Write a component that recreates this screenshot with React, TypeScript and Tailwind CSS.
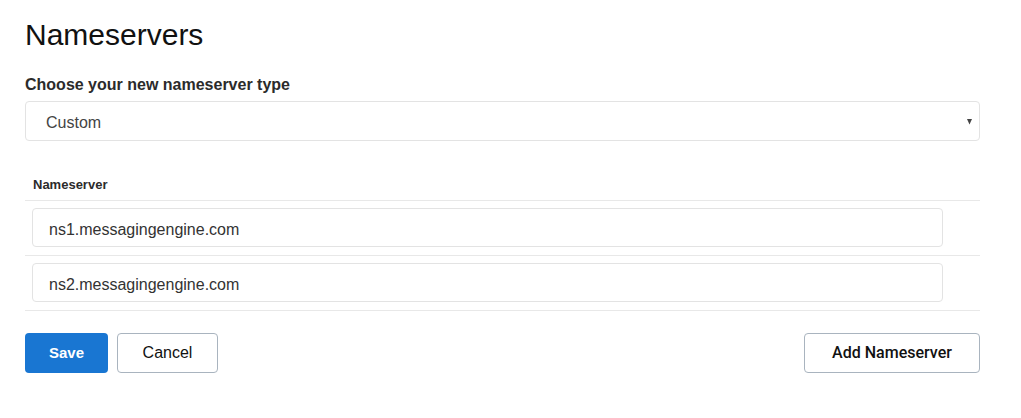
export default function App() {
  const servers = ["ns1.messagingengine.com", "ns2.messagingengine.com"]

  return (
    <div className="min-h-[418px] bg-white font-['Liberation_Sans',Arial,sans-serif]">
      <div className="ml-[25px] w-[955px] pt-[17px]">
        {/* Title */}
        <h1 className="text-[30px] leading-[36px] font-normal text-[#111]">
          Nameservers
        </h1>

        {/* Type select */}
        <div className="mt-[22px] mb-[6px] text-[16px] leading-[20px] font-bold text-[#2b2b2b]">
          Choose your new nameserver type
        </div>
        <div className="flex h-[40px] items-start justify-between rounded-[4px] border border-[#e3e3e3] pt-[11px] pl-[20px] pr-[7px]">
          <span className="text-[16px] leading-[20px] text-[#444]">Custom</span>
          <svg width="5" height="6" viewBox="0 0 5 6" className="mt-[6px]">
            <polygon points="0,0 5,0 2.5,5.5" fill="#444" />
          </svg>
        </div>

        {/* Nameserver table */}
        <div className="mt-[36px]">
          <div className="h-[24px] border-b border-[#e8e8e8] pl-[8px] text-[13px] leading-[16px] font-bold text-[#2b2b2b]">
            Nameserver
          </div>
          {servers.map((s) => (
            <div
              key={s}
              className="border-b border-[#e8e8e8] pt-[7px] pb-[8px] pl-[7px] pr-[37px]"
            >
              <div className="h-[39px] rounded-[4px] border border-[#e3e3e3] pt-[11px] pl-[16px] text-[16px] leading-[20px] text-[#333]">
                {s}
              </div>
            </div>
          ))}
        </div>

        {/* Actions */}
        <div className="mt-[22px] flex items-center justify-between">
          <div className="flex gap-[9px]">
            <button className="h-[40px] w-[83px] rounded-[4px] bg-[#1976d2] text-[15px] font-bold text-white">
              Save
            </button>
            <button className="h-[40px] w-[101px] rounded-[4px] border border-[#a9b4bf] bg-white text-[16px] text-[#111]">
              Cancel
            </button>
          </div>
          <button className="h-[40px] w-[176px] rounded-[4px] border border-[#a9b4bf] bg-white font-['Roboto',Arial,sans-serif] text-[16px] font-medium text-[#111]">
            Add Nameserver
          </button>
        </div>
      </div>
    </div>
  )
}
